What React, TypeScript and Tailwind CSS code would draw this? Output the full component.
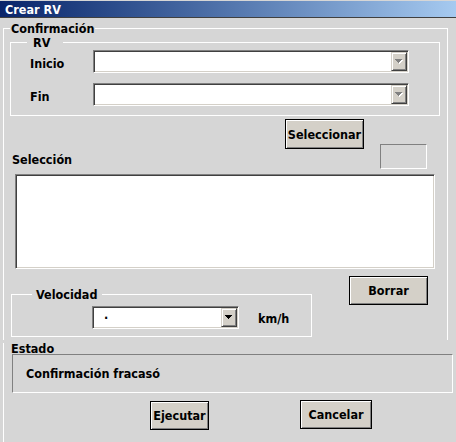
import React from "react";

const sunken =
  "border border-t-[#808080] border-l-[#808080] border-b-white border-r-white shadow-[inset_1px_1px_0_#404040,inset_-1px_-1px_0_#d4d0c8]";

const Arrow = ({ disabled }: { disabled?: boolean }) => (
  <svg width="8" height="5" viewBox="0 0 8 5" shapeRendering="crispEdges">
    {disabled && (
      <g fill="#ffffff">
        <rect x="1" y="1" width="7" height="1" />
        <rect x="2" y="2" width="5" height="1" />
        <rect x="3" y="3" width="3" height="1" />
        <rect x="4" y="4" width="1" height="1" />
      </g>
    )}
    <g fill={disabled ? "#808080" : "#000000"}>
      <rect x="0" y="0" width="7" height="1" />
      <rect x="1" y="1" width="5" height="1" />
      <rect x="2" y="2" width="3" height="1" />
      <rect x="3" y="3" width="1" height="1" />
    </g>
  </svg>
);

type ComboProps = {
  className: string;
  value?: string;
  disabled?: boolean;
};

const Combo = ({ className, value, disabled }: ComboProps) => (
  <div className={`flex h-[23px] p-px bg-white ${sunken} ${className}`}>
    <div className="flex flex-1 items-center pl-[10px] leading-[13px]">{value}</div>
    <div className="flex h-full w-[16px] items-center justify-center bg-[#d4d0c8] border border-t-[#d4d0c8] border-l-[#d4d0c8] border-b-[#404040] border-r-[#404040] shadow-[inset_1px_1px_0_#fff,inset_-1px_-1px_0_#808080]">
      <Arrow disabled={disabled} />
    </div>
  </div>
);

const Button = ({ className, children }: { className: string; children: React.ReactNode }) => (
  <button
    className={`flex items-center justify-center bg-[#d4d0c8] border border-black shadow-[inset_1px_1px_0_#fff,inset_-1px_-1px_0_#808080] leading-[13px] ${className}`}
  >
    {children}
  </button>
);

export default function App() {
  return (
    <div className="w-[456px] h-[442px] overflow-hidden bg-[#d6d6d6] font-['DejaVu_Sans_Condensed','DejaVu_Sans',sans-serif] text-[12.5px] font-bold text-black">
      <div className="mt-px h-[17px] border-b border-[#404040] bg-linear-to-r from-[#0a246a] to-[#a6caf0] pl-[5px] pt-[2px] leading-[13px] text-white">
        Crear RV
      </div>

      <div className="ml-[3px] w-[453px]">
        <fieldset className="mt-[4px] h-[318px] w-[445px] border-t border-l border-r border-white">
          <legend className="ml-[6px] px-px leading-[13px]">Confirmación</legend>

          <fieldset className="mt-px ml-[6px] h-[80px] w-[430px] border border-white">
            <legend className="ml-[16px] pl-[6px] pr-[13px] leading-[13px]">RV</legend>
            <div className="mt-px flex items-start">
              <span className="ml-[19px] mt-[7px] w-[63px] leading-[13px]">Inicio</span>
              <Combo className="w-[316px]" disabled />
            </div>
            <div className="mt-[10px] flex items-start">
              <span className="ml-[19px] mt-[7px] w-[63px] leading-[13px]">Fin</span>
              <Combo className="w-[316px]" disabled />
            </div>
          </fieldset>

          <div className="mt-[3px] flex h-[50px]">
            <span className="ml-[8px] mb-[3px] w-[273px] self-end leading-[13px]">Selección</span>
            <Button className="h-[30px] w-[79px] self-start">Seleccionar</Button>
            <div className="ml-[16px] h-[25px] w-[47px] self-end border border-t-[#808080] border-l-[#808080] border-b-white border-r-white" />
          </div>

          <div className={`mt-[5px] ml-[11px] h-[95px] w-[420px] bg-white ${sunken}`} />

          <div className="flex items-start">
            <fieldset className="ml-[7px] mt-[19px] h-[49px] w-[301px] border border-white">
              <legend className="ml-[20px] pl-[4px] pr-[5px] leading-[13px]">Velocidad</legend>
              <div className="flex items-start">
                <Combo className="ml-[80px] mt-[5px] w-[147px]" value="·" />
                <span className="ml-[19px] mt-[11px] leading-[13px]">km/h</span>
              </div>
            </fieldset>
            <Button className="ml-[37px] mt-[7px] h-[29px] w-[79px]">Borrar</Button>
          </div>
        </fieldset>

        <div className="h-[102px] border-l border-white">
          <div className="ml-[7px] mt-[3px] leading-[11px]">Estado</div>
          <div className="ml-[8px] h-[39px] w-[441px] border border-t-[#808080] border-l-[#808080] border-b-white border-r-white pl-[13px] pt-[12px] leading-[13px]">
            Confirmación fracasó
          </div>
          <div className="mt-[7px] flex items-start">
            <Button className="ml-[146px] mt-px h-[29px] w-[59px]">Ejecutar</Button>
            <Button className="ml-[91px] h-[29px] w-[72px]">Cancelar</Button>
          </div>
        </div>
      </div>
    </div>
  );
}
